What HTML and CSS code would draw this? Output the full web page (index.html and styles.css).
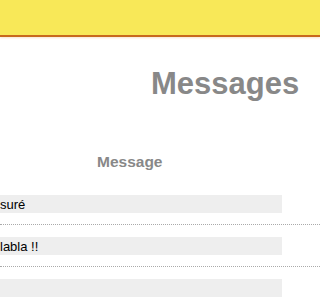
FILE: index.html
```html
<!DOCTYPE html>
<html lang="fr">
<head>
<meta charset="utf-8">
<title>Messages</title>
<link rel="stylesheet" href="styles.css">
</head>
<body>
<div class="topbar"></div>
<h1 class="title">Messages</h1>
<div class="col-head">Message</div>
<div class="list">
  <div class="row"><div class="cell">suré</div></div>
  <div class="row"><div class="cell">labla !!</div></div>
  <div class="row"><div class="cell"></div></div>
</div>
</body>
</html>
```

FILE: styles.css
```css
html, body {
  margin: 0;
  padding: 0;
  background: #fff;
}
body {
  font-family: "Liberation Sans", Arial, sans-serif;
  height: 300px;
  overflow: hidden;
}
.topbar {
  height: 35px;
  background: #f8e858;
  border-bottom: 2px solid #c8681c;
  box-shadow: 0 1px 2px rgba(220, 140, 60, 0.25);
}
.title {
  margin: 29px 0 0 0;
  padding-left: 151px;
  font-size: 31px;
  line-height: 36px;
  font-weight: bold;
  color: #888;
  white-space: nowrap;
  overflow: hidden;
}
.col-head {
  margin-top: 51px;
  padding-left: 97px;
  font-size: 15.5px;
  line-height: 18px;
  font-weight: bold;
  color: #888;
}
.list {
  margin-top: 24px;
}
.row {
  padding-bottom: 11px;
  border-bottom: 1px dotted #aaa;
  margin-bottom: 12px;
}
.cell {
  width: 282px;
  height: 18px;
  box-sizing: border-box;
  padding-top: 2px;
  background: #eee;
  font-size: 13px;
  line-height: 16px;
  color: #000;
}
```
